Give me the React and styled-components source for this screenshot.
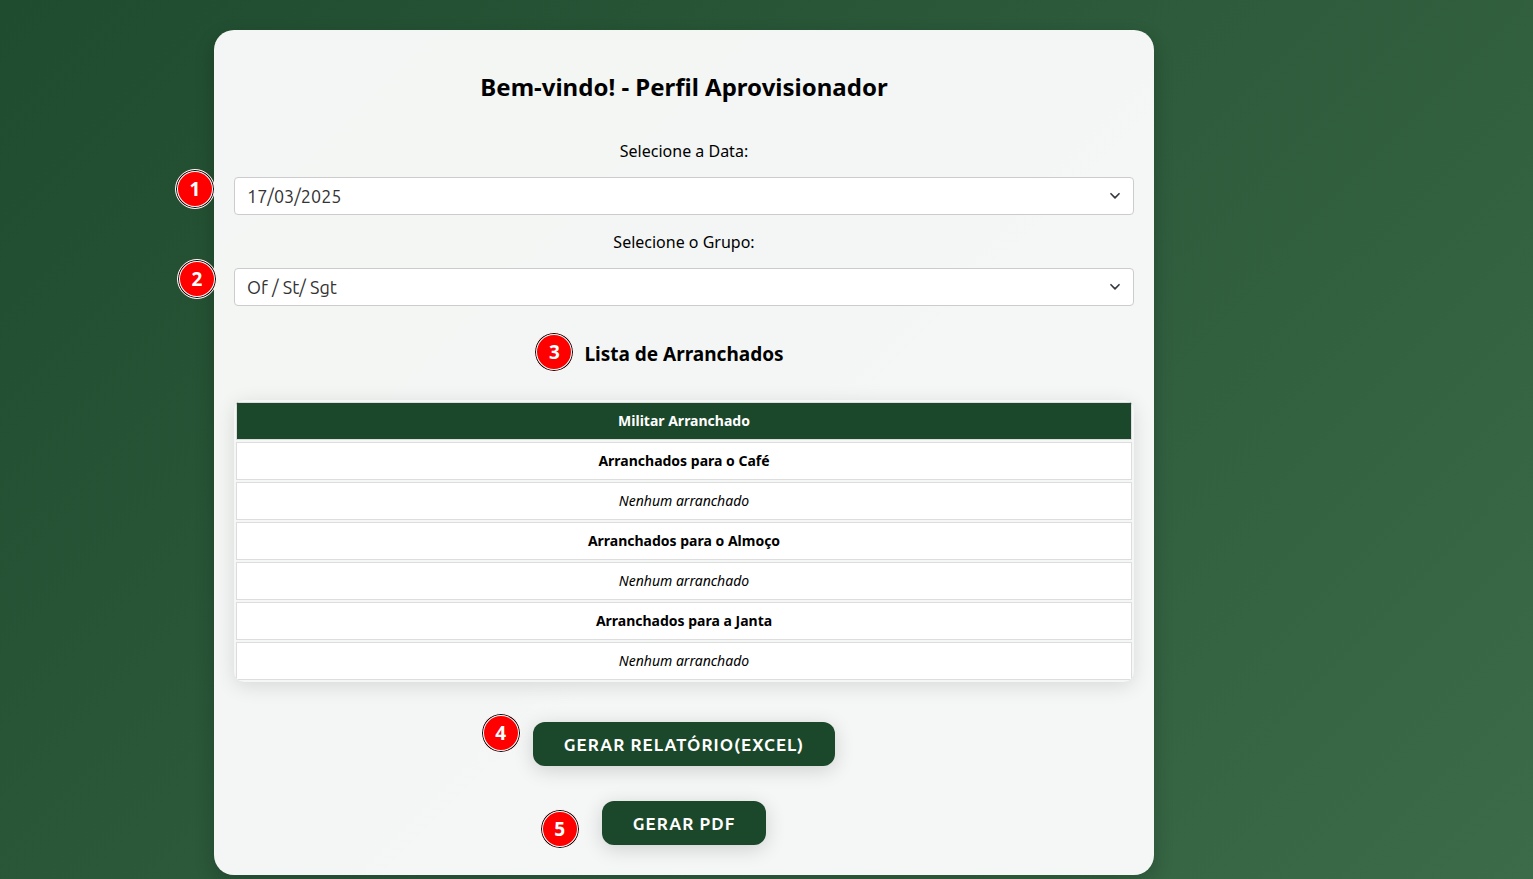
import React, { useState } from "react";
import styled, { createGlobalStyle } from "styled-components";

const GlobalStyle = createGlobalStyle`
  *, *::before, *::after { box-sizing: border-box; }
  body {
    margin: 0;
    color: #000;
    font-family: "Noto Sans", sans-serif;
    font-size: 16px;
    line-height: 22px;
  }
`;

const Page = styled.div`
  min-height: 100vh;
  padding: 30px 165px 4px 0;
  background: linear-gradient(135deg, #1f4b2e, #3b6b48);
`;

const Card = styled.main`
  max-width: 940px;
  margin: 0 auto;
  padding: 40px 20px 30px;
  border-radius: 20px;
  background: rgba(255, 255, 255, 0.95);
  box-shadow: 0 8px 20px rgba(0, 0, 0, 0.2);
  display: flex;
  flex-direction: column;
  text-align: center;
`;

const Title = styled.h2`
  margin: 0 0 36px;
  font-size: 24px;
  font-weight: 700;
  line-height: 34px;
`;

const Field = styled.div`
  margin-bottom: 16px;
`;

const Label = styled.label`
  display: block;
  margin-bottom: 15px;
`;

const SelectBox = styled.div`
  position: relative;
`;

const Select = styled.select`
  display: block;
  width: 100%;
  height: 38px;
  padding: 0 36px 0 12px;
  border: 1px solid #ccc;
  border-radius: 4px;
  background: #fff;
  color: #333;
  font-family: Ubuntu, "Noto Sans", sans-serif;
  font-size: 18px;
  appearance: none;
`;

const Chevron = styled.svg`
  position: absolute;
  top: 13px;
  right: 13px;
  width: 12px;
  height: 12px;
  fill: none;
  stroke: #343a40;
  stroke-width: 2.2;
  stroke-linecap: round;
  stroke-linejoin: round;
  pointer-events: none;
`;

const Badge = styled.span`
  position: absolute;
  top: ${(p) => p.$top}px;
  left: ${(p) => p.$left}px;
  width: 40px;
  height: 40px;
  border: 1px solid #fff;
  border-radius: 50%;
  background: #f00;
  box-shadow: inset 0 0 0 1px #000, inset 0 0 0 2px #fff;
  color: #fff;
  font-family: "Noto Sans", sans-serif;
  font-size: 19px;
  font-weight: 700;
  line-height: 38px;
  text-align: center;
`;

const ListTitle = styled.h3`
  position: relative;
  align-self: center;
  margin: 19px 0 33px;
  font-size: 19px;
  font-weight: 700;
  line-height: 26px;
`;

const Table = styled.table`
  width: 100%;
  border-collapse: separate;
  border-spacing: 2px;
  border-radius: 10px;
  overflow: hidden;
  background: #f5f6f6;
  box-shadow: 0 4px 20px rgba(0, 0, 0, 0.12);
  font-size: 14px;
  line-height: 20px;
`;

const HeadCell = styled.th`
  padding: 8px;
  border: 1px solid #ddd;
  background: #1b472a;
  color: #fff;
`;

const MealCell = styled.th`
  padding: 8px;
  border: 1px solid #ddd;
  background: #fff;
`;

const EmptyCell = styled.td`
  padding: 8px;
  border: 1px solid #ddd;
  background: #fff;
  font-style: italic;
`;

const Actions = styled.div`
  display: flex;
  flex-direction: column;
  align-items: center;
  gap: 35px;
  margin-top: 40px;
`;

const Action = styled.div`
  position: relative;
`;

const Button = styled.button`
  display: block;
  height: 44px;
  padding: 0 31px;
  border: 0;
  border-radius: 12px;
  background: #1b472a;
  box-shadow: 0 4px 20px rgba(0, 0, 0, 0.16);
  color: #fff;
  font-family: Ubuntu, "Noto Sans", sans-serif;
  font-size: 17px;
  font-weight: 600;
  letter-spacing: 1px;
  text-transform: uppercase;
  cursor: pointer;
`;

const meals = ["Arranchados para o Café", "Arranchados para o Almoço", "Arranchados para a Janta"];

function SelectField({ id, label, options, badge, left, top }) {
  const [value, setValue] = useState(options[0]);
  return (
    <Field>
      <Label htmlFor={id}>{label}</Label>
      <SelectBox>
        <Select id={id} value={value} onChange={(e) => setValue(e.target.value)}>
          {options.map((o) => (
            <option key={o}>{o}</option>
          ))}
        </Select>
        <Chevron viewBox="0 0 16 16" aria-hidden="true">
          <path d="m2.6 5 5.4 5.4 5.4-5.4" />
        </Chevron>
        <Badge $left={left} $top={top}>{badge}</Badge>
      </SelectBox>
    </Field>
  );
}

export default function App() {
  return (
    <>
      <GlobalStyle />
      <Page>
        <Card>
          <Title>Bem-vindo! - Perfil Aprovisionador</Title>
          <SelectField id="data" label="Selecione a Data:" options={["17/03/2025"]} badge="1" left={-59} top={-8} />
          <SelectField id="grupo" label="Selecione o Grupo:" options={["Of / St/ Sgt"]} badge="2" left={-57} top={-9} />
          <ListTitle>
            <Badge $left={-50} $top={-9}>3</Badge>
            Lista de Arranchados
          </ListTitle>
          <Table>
            <thead>
              <tr>
                <HeadCell scope="col">Militar Arranchado</HeadCell>
              </tr>
            </thead>
            <tbody>
              {meals.map((meal) => (
                <React.Fragment key={meal}>
                  <tr>
                    <MealCell scope="row">{meal}</MealCell>
                  </tr>
                  <tr>
                    <EmptyCell>Nenhum arranchado</EmptyCell>
                  </tr>
                </React.Fragment>
              ))}
            </tbody>
          </Table>
          <Actions>
            <Action>
              <Badge $left={-52} $top={-9}>4</Badge>
              <Button type="button">Gerar Relatório(Excel)</Button>
            </Action>
            <Action>
              <Badge $left={-62} $top={8}>5</Badge>
              <Button type="button">Gerar PDF</Button>
            </Action>
          </Actions>
        </Card>
      </Page>
    </>
  );
}
